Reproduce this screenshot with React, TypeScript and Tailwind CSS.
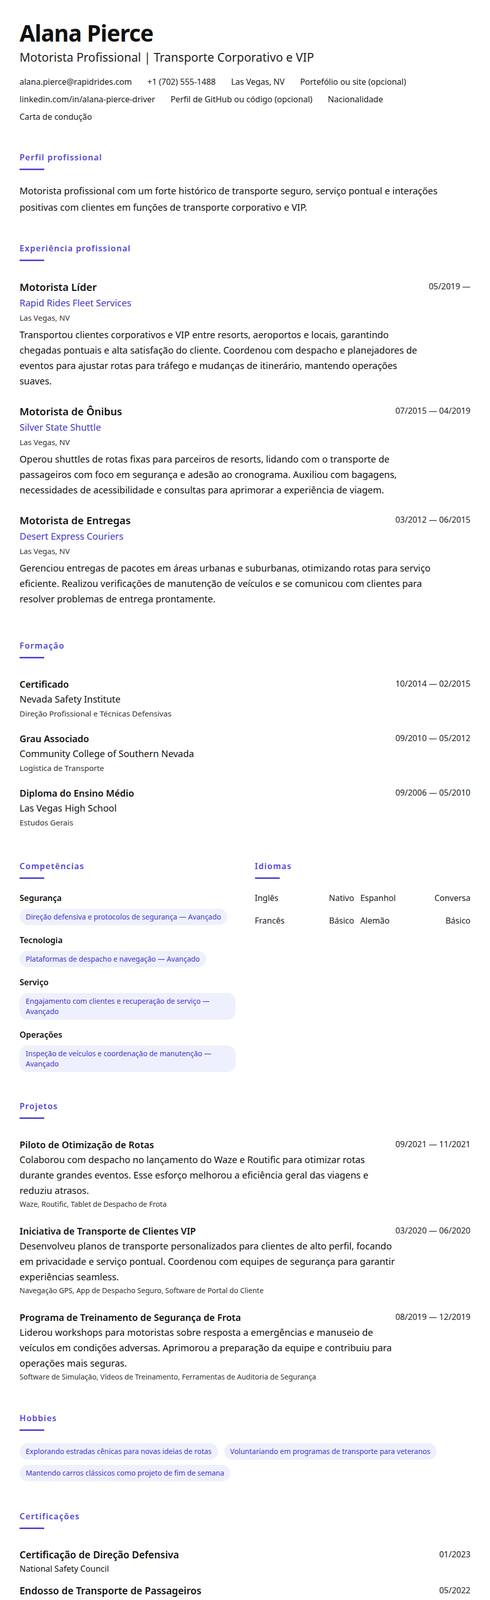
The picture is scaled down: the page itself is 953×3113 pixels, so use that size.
const Heading = ({ children }: { children: string }) => (
  <div className="mb-9">
    <h2 className="text-[16px] font-semibold tracking-[0.08em] text-[#5046d6]">{children}</h2>
    <div className="mt-[10px] h-[3px] w-12 bg-[#5046d6]" />
  </div>
);

const jobs = [
  {
    title: "Motorista Líder",
    company: "Rapid Rides Fleet Services",
    date: "05/2019 —",
    desc: "Transportou clientes corporativos e VIP entre resorts, aeroportos e locais, garantindo chegadas pontuais e alta satisfação do cliente. Coordenou com despacho e planejadores de eventos para ajustar rotas para tráfego e mudanças de itinerário, mantendo operações suaves.",
  },
  {
    title: "Motorista de Ônibus",
    company: "Silver State Shuttle",
    date: "07/2015 — 04/2019",
    desc: "Operou shuttles de rotas fixas para parceiros de resorts, lidando com o transporte de passageiros com foco em segurança e adesão ao cronograma. Auxiliou com bagagens, necessidades de acessibilidade e consultas para aprimorar a experiência de viagem.",
  },
  {
    title: "Motorista de Entregas",
    company: "Desert Express Couriers",
    date: "03/2012 — 06/2015",
    desc: "Gerenciou entregas de pacotes em áreas urbanas e suburbanas, otimizando rotas para serviço eficiente. Realizou verificações de manutenção de veículos e se comunicou com clientes para resolver problemas de entrega prontamente.",
  },
];

const edu = [
  ["Certificado", "Nevada Safety Institute", "Direção Profissional e Técnicas Defensivas", "10/2014 — 02/2015"],
  ["Grau Associado", "Community College of Southern Nevada", "Logística de Transporte", "09/2010 — 05/2012"],
  ["Diploma do Ensino Médio", "Las Vegas High School", "Estudos Gerais", "09/2006 — 05/2010"],
];

const skills = [
  ["Segurança", "Direção defensiva e protocolos de segurança — Avançado"],
  ["Tecnologia", "Plataformas de despacho e navegação — Avançado"],
  ["Serviço", "Engajamento com clientes e recuperação de serviço — Avançado"],
  ["Operações", "Inspeção de veículos e coordenação de manutenção — Avançado"],
];

const projects = [
  {
    title: "Piloto de Otimização de Rotas",
    date: "09/2021 — 11/2021",
    desc: "Colaborou com despacho no lançamento do Waze e Routific para otimizar rotas durante grandes eventos. Esse esforço melhorou a eficiência geral das viagens e reduziu atrasos.",
    tech: "Waze, Routific, Tablet de Despacho de Frota",
  },
  {
    title: "Iniciativa de Transporte de Clientes VIP",
    date: "03/2020 — 06/2020",
    desc: "Desenvolveu planos de transporte personalizados para clientes de alto perfil, focando em privacidade e serviço pontual. Coordenou com equipes de segurança para garantir experiências seamless.",
    tech: "Navegação GPS, App de Despacho Seguro, Software de Portal do Cliente",
  },
  {
    title: "Programa de Treinamento de Segurança de Frota",
    date: "08/2019 — 12/2019",
    desc: "Liderou workshops para motoristas sobre resposta a emergências e manuseio de veículos em condições adversas. Aprimorou a preparação da equipe e contribuiu para operações mais seguras.",
    tech: "Software de Simulação, Vídeos de Treinamento, Ferramentas de Auditoria de Segurança",
  },
];

const Pill = ({ children }: { children: string }) => (
  <span className="inline-block rounded-[16px] bg-[#eef0fd] px-3 py-[6px] text-[14px] leading-[20px] text-[#4338ca]">
    {children}
  </span>
);

export default function App() {
  return (
    <div className="min-h-[3113px] bg-white px-[38px] pt-9 pb-12 text-[#111] font-['Inter',sans-serif]">
      <h1 className="text-[44px] font-bold leading-[56px] tracking-[-0.02em]">Alana Pierce</h1>
      <p className="mt-1 text-[23px] leading-[30px] text-[#222]">Motorista Profissional | Transporte Corporativo e VIP</p>
      <div className="mt-[16px] flex flex-wrap gap-x-[30px] text-[16px] leading-[34px] text-[#222]">
        <span>alana.pierce@rapidrides.com</span>
        <span>+1 (702) 555-1488</span>
        <span>Las Vegas, NV</span>
        <span>Portefólio ou site (opcional)</span>
        <span>linkedin.com/in/alana-pierce-driver</span>
        <span>Perfil de GitHub ou código (opcional)</span>
        <span>Nacionalidade</span>
        <span>Carta de condução</span>
      </div>

      <section className="mt-[50px]">
        <Heading>Perfil profissional</Heading>
        <p className="-mt-3 text-[18px] leading-[32px]">
          Motorista profissional com um forte histórico de transporte seguro, serviço pontual e interações positivas com clientes em funções de transporte corporativo e VIP.
        </p>
      </section>

      <section className="mt-[52px]">
        <Heading>Experiência profissional</Heading>
        <div className="flex flex-col gap-[30px]">
          {jobs.map((j) => (
            <div key={j.title}>
              <div className="flex justify-between">
                <h3 className="text-[20px] font-semibold leading-[30px]">{j.title}</h3>
                <span className="text-[16px] leading-[26px] text-[#222]">{j.date}</span>
              </div>
              <div className="text-[18px] leading-[30px] text-[#4338ca]">{j.company}</div>
              <div className="text-[15px] leading-[28px] text-[#333]">Las Vegas, NV</div>
              <p className="mt-1 max-w-[800px] text-[18px] leading-[30px]">{j.desc}</p>
            </div>
          ))}
        </div>
      </section>

      <section className="mt-[64px]">
        <Heading>Formação</Heading>
        <div className="flex flex-col gap-[22px]">
          {edu.map((e) => (
            <div key={e[0]}>
              <div className="flex justify-between">
                <h3 className="text-[18px] font-semibold leading-[28px]">{e[0]}</h3>
                <span className="text-[16px] leading-[26px] text-[#222]">{e[3]}</span>
              </div>
              <div className="text-[18px] leading-[30px]">{e[1]}</div>
              <div className="text-[15px] leading-[26px] text-[#333]">{e[2]}</div>
            </div>
          ))}
        </div>
      </section>

      <section className="mt-[60px] grid grid-cols-2 gap-x-[38px]">
        <div>
          <Heading>Competências</Heading>
          <div className="-mt-3 flex flex-col gap-[16px]">
            {skills.map((s) => (
              <div key={s[0]}>
                <h3 className="text-[16px] font-semibold leading-[26px]">{s[0]}</h3>
                <div className="mt-[8px]">
                  <Pill>{s[1]}</Pill>
                </div>
              </div>
            ))}
          </div>
        </div>
        <div>
          <Heading>Idiomas</Heading>
          <div className="-mt-3 grid grid-cols-[1fr_auto_1fr_auto] gap-x-3 gap-y-[18px] text-[16px] leading-[26px] text-[#222]">
            <span>Inglês</span>
            <span className="text-right">Nativo</span>
            <span>Espanhol</span>
            <span className="text-right">Conversa</span>
            <span>Francês</span>
            <span className="text-right">Básico</span>
            <span>Alemão</span>
            <span className="text-right">Básico</span>
          </div>
        </div>
      </section>

      <section className="mt-[54px]">
        <Heading>Projetos</Heading>
        <div className="flex flex-col gap-[26px]">
          {projects.map((p) => (
            <div key={p.title}>
              <div className="flex justify-between">
                <h3 className="text-[18px] font-semibold leading-[28px]">{p.title}</h3>
                <span className="text-[16px] leading-[26px] text-[#222]">{p.date}</span>
              </div>
              <p className="max-w-[740px] text-[18px] leading-[30px]">{p.desc}</p>
              <div className="text-[14px] leading-[24px] text-[#333]">{p.tech}</div>
            </div>
          ))}
        </div>
      </section>

      <section className="mt-[56px]">
        <Heading>Hobbies</Heading>
        <div className="-mt-3 flex flex-wrap gap-x-3 gap-y-[10px]">
          <Pill>Explorando estradas cênicas para novas ideias de rotas</Pill>
          <Pill>Voluntariando em programas de transporte para veteranos</Pill>
          <Pill>Mantendo carros clássicos como projeto de fim de semana</Pill>
        </div>
      </section>

      <section className="mt-[56px]">
        <Heading>Certificações</Heading>
        <div className="flex flex-col gap-[16px]">
          {[
            ["Certificação de Direção Defensiva", "National Safety Council", "01/2023"],
            ["Endosso de Transporte de Passageiros", "Nevada Department of Motor Vehicles", "05/2022"],
          ].map((c) => (
            <div key={c[0]}>
              <div className="flex justify-between">
                <h3 className="text-[19px] font-semibold leading-[28px]">{c[0]}</h3>
                <span className="text-[16px] leading-[26px] text-[#222]">{c[2]}</span>
              </div>
              <div className="text-[16px] leading-[26px]">{c[1]}</div>
            </div>
          ))}
        </div>
      </section>
    </div>
  );
}
